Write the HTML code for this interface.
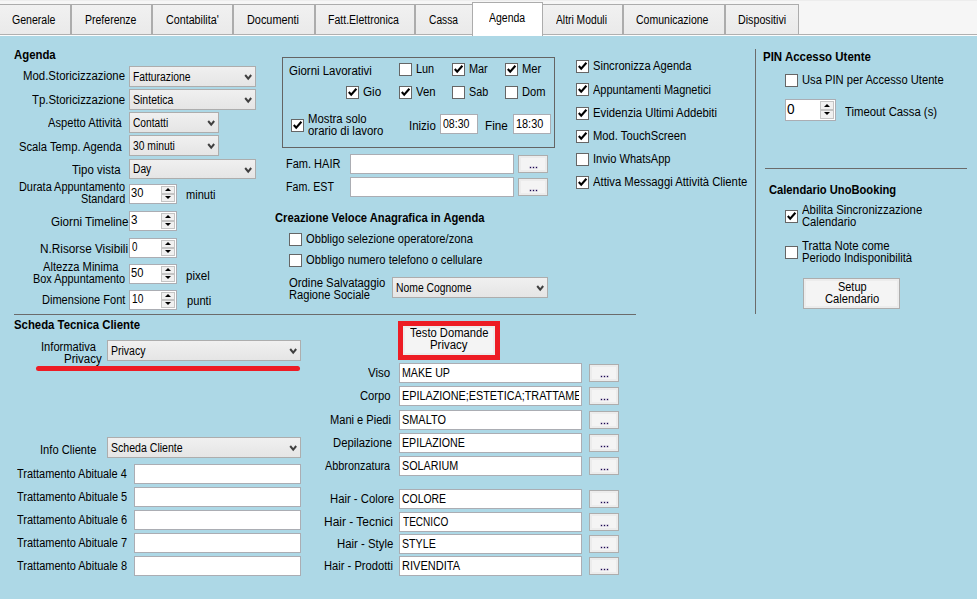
<!DOCTYPE html><html><head><meta charset="utf-8"><title>Agenda</title><style>
html,body{margin:0;padding:0;}
body{width:977px;height:599px;overflow:hidden;background:#add8e6;font-family:"Liberation Sans",sans-serif;font-size:12px;color:#000;position:relative;}
.t{position:absolute;white-space:nowrap;line-height:14px;font-size:12px;transform-origin:0 0;}
.b{font-weight:bold;}
.top{position:absolute;left:0;top:0;width:977px;height:36px;background:#f6f6f6;border-top:1px solid #ededed;box-sizing:border-box;}
.tl{position:absolute;left:0;top:34px;width:977px;height:1px;background:#b0b0b0;box-shadow:0 1px 0 #fcfcfc;}
.tab{position:absolute;top:4px;height:30px;border:1px solid #acacac;border-bottom:none;background:linear-gradient(#f1f1f1,#eaeaea);box-sizing:border-box;}
.tab.sel{top:2px;height:34px;background:#fff;z-index:2;}
.cb{position:absolute;width:13px;height:13px;box-sizing:border-box;border:1px solid #666;background:#fff;}
.cb svg{position:absolute;left:0;top:0;}
.combo{position:absolute;height:21px;box-sizing:border-box;border:1px solid #adadad;background:linear-gradient(#f0f0f0,#e5e5e5);}
.combo svg{position:absolute;right:3.1px;top:6.6px;}
.tb{position:absolute;height:20px;box-sizing:border-box;border:1px solid #abadb3;background:#fff;overflow:hidden;}
.btn{position:absolute;box-sizing:border-box;border:1px solid #adadad;background:#f4f4f4;box-shadow:inset 0 0 0 2px #ececec;}
.num{position:absolute;height:20px;box-sizing:border-box;border:1px solid #abadb3;background:#fff;}
.num i{position:absolute;right:1px;width:14px;height:8px;background:#f0f0f0;border:1px solid #c4c4c4;box-sizing:border-box;}

.num i:after{content:"";position:absolute;left:3px;border-left:3px solid transparent;border-right:3px solid transparent;}
.num i.u:after{bottom:2px;border-bottom:3px solid #000;}
.num i.d:after{top:1px;border-top:3px solid #000;}
.hl{position:absolute;height:1px;background:#6b6b6b;}
.vl{position:absolute;width:1px;background:#6b6b6b;}
.z{z-index:5}
</style></head><body>
<div class="top"></div><div class="tl"></div>
<div class="tab" style="left:-1px;width:72px"></div>
<div class="tab" style="left:71px;width:81px"></div>
<div class="tab" style="left:152px;width:81px"></div>
<div class="tab" style="left:233px;width:82px"></div>
<div class="tab" style="left:315px;width:100px"></div>
<div class="tab" style="left:415px;width:59px"></div>
<div class="tab" style="left:542px;width:81px"></div>
<div class="tab" style="left:623px;width:102px"></div>
<div class="tab" style="left:725px;width:74px"></div>
<div class="tab sel" style="left:472px;width:71px"></div>
<div class="combo" style="left:129px;top:66px;width:127px;height:21px"><svg width="8.4" height="7" viewBox="0 0 8.4 7"><path d="M1.2 1 L4.2 4.6 L7.2 1" fill="none" stroke="#404040" stroke-width="2"/></svg></div>
<div class="combo" style="left:129px;top:89px;width:127px;height:21px"><svg width="8.4" height="7" viewBox="0 0 8.4 7"><path d="M1.2 1 L4.2 4.6 L7.2 1" fill="none" stroke="#404040" stroke-width="2"/></svg></div>
<div class="combo" style="left:129px;top:112px;width:90px;height:21px"><svg width="8.4" height="7" viewBox="0 0 8.4 7"><path d="M1.2 1 L4.2 4.6 L7.2 1" fill="none" stroke="#404040" stroke-width="2"/></svg></div>
<div class="combo" style="left:129px;top:135px;width:90px;height:21px"><svg width="8.4" height="7" viewBox="0 0 8.4 7"><path d="M1.2 1 L4.2 4.6 L7.2 1" fill="none" stroke="#404040" stroke-width="2"/></svg></div>
<div class="combo" style="left:129px;top:159px;width:127px;height:20px"><svg width="8.4" height="7" viewBox="0 0 8.4 7"><path d="M1.2 1 L4.2 4.6 L7.2 1" fill="none" stroke="#404040" stroke-width="2"/></svg></div>
<div class="num" style="left:129px;top:184px;width:48px;height:20px"><i class="u" style="top:1px;height:8px"></i><i class="d" style="top:9px;height:8px"></i></div>
<div class="num" style="left:129px;top:211px;width:48px;height:20px"><i class="u" style="top:1px;height:8px"></i><i class="d" style="top:9px;height:8px"></i></div>
<div class="num" style="left:129px;top:238px;width:48px;height:20px"><i class="u" style="top:1px;height:8px"></i><i class="d" style="top:9px;height:8px"></i></div>
<div class="num" style="left:129px;top:264px;width:48px;height:20px"><i class="u" style="top:1px;height:8px"></i><i class="d" style="top:9px;height:8px"></i></div>
<div class="num" style="left:129px;top:290px;width:48px;height:20px"><i class="u" style="top:1px;height:8px"></i><i class="d" style="top:9px;height:8px"></i></div>
<div style="position:absolute;left:282px;top:57px;width:273px;height:91px;border:1px solid #646464;box-sizing:border-box"></div>
<div class="cb" style="left:399px;top:63px"></div>
<div class="cb" style="left:452px;top:63px"><svg width="11" height="11" viewBox="0 0 11 11"><path d="M1.8 5.0 L4.2 7.7 L9.4 1.7" fill="none" stroke="#000" stroke-width="2.1"/></svg></div>
<div class="cb" style="left:505px;top:63px"><svg width="11" height="11" viewBox="0 0 11 11"><path d="M1.8 5.0 L4.2 7.7 L9.4 1.7" fill="none" stroke="#000" stroke-width="2.1"/></svg></div>
<div class="cb" style="left:346px;top:86px"><svg width="11" height="11" viewBox="0 0 11 11"><path d="M1.8 5.0 L4.2 7.7 L9.4 1.7" fill="none" stroke="#000" stroke-width="2.1"/></svg></div>
<div class="cb" style="left:399px;top:86px"><svg width="11" height="11" viewBox="0 0 11 11"><path d="M1.8 5.0 L4.2 7.7 L9.4 1.7" fill="none" stroke="#000" stroke-width="2.1"/></svg></div>
<div class="cb" style="left:452px;top:86px"></div>
<div class="cb" style="left:505px;top:86px"></div>
<div class="cb" style="left:291px;top:119px"><svg width="11" height="11" viewBox="0 0 11 11"><path d="M1.8 5.0 L4.2 7.7 L9.4 1.7" fill="none" stroke="#000" stroke-width="2.1"/></svg></div>
<div class="tb" style="left:440px;top:114px;width:38px;height:20px"></div>
<div class="tb" style="left:513px;top:114px;width:38px;height:20px"></div>
<div class="tb" style="left:350px;top:154px;width:164px;height:20px"></div>
<div class="btn" style="left:518px;top:155px;width:30px;height:18px;"></div>
<div style="position:absolute;left:530px;top:167px;width:1px;height:1px;background:#1a0a50;box-shadow:0 0 0 0.4px rgba(60,30,110,.55)"></div>
<div style="position:absolute;left:533px;top:167px;width:1px;height:1px;background:#1a0a50;box-shadow:0 0 0 0.4px rgba(60,30,110,.55)"></div>
<div style="position:absolute;left:536px;top:167px;width:1px;height:1px;background:#1a0a50;box-shadow:0 0 0 0.4px rgba(60,30,110,.55)"></div>
<div class="tb" style="left:350px;top:177px;width:164px;height:20px"></div>
<div class="btn" style="left:518px;top:178px;width:30px;height:18px;"></div>
<div style="position:absolute;left:530px;top:190px;width:1px;height:1px;background:#1a0a50;box-shadow:0 0 0 0.4px rgba(60,30,110,.55)"></div>
<div style="position:absolute;left:533px;top:190px;width:1px;height:1px;background:#1a0a50;box-shadow:0 0 0 0.4px rgba(60,30,110,.55)"></div>
<div style="position:absolute;left:536px;top:190px;width:1px;height:1px;background:#1a0a50;box-shadow:0 0 0 0.4px rgba(60,30,110,.55)"></div>
<div class="cb" style="left:289px;top:233px"></div>
<div class="cb" style="left:289px;top:254px"></div>
<div class="combo" style="left:392px;top:277px;width:156px;height:21px"><svg width="8.4" height="7" viewBox="0 0 8.4 7"><path d="M1.2 1 L4.2 4.6 L7.2 1" fill="none" stroke="#404040" stroke-width="2"/></svg></div>
<div class="cb" style="left:576px;top:60px"><svg width="11" height="11" viewBox="0 0 11 11"><path d="M1.8 5.0 L4.2 7.7 L9.4 1.7" fill="none" stroke="#000" stroke-width="2.1"/></svg></div>
<div class="cb" style="left:576px;top:83px"><svg width="11" height="11" viewBox="0 0 11 11"><path d="M1.8 5.0 L4.2 7.7 L9.4 1.7" fill="none" stroke="#000" stroke-width="2.1"/></svg></div>
<div class="cb" style="left:576px;top:107px"><svg width="11" height="11" viewBox="0 0 11 11"><path d="M1.8 5.0 L4.2 7.7 L9.4 1.7" fill="none" stroke="#000" stroke-width="2.1"/></svg></div>
<div class="cb" style="left:576px;top:130px"><svg width="11" height="11" viewBox="0 0 11 11"><path d="M1.8 5.0 L4.2 7.7 L9.4 1.7" fill="none" stroke="#000" stroke-width="2.1"/></svg></div>
<div class="cb" style="left:576px;top:153px"></div>
<div class="cb" style="left:576px;top:176px"><svg width="11" height="11" viewBox="0 0 11 11"><path d="M1.8 5.0 L4.2 7.7 L9.4 1.7" fill="none" stroke="#000" stroke-width="2.1"/></svg></div>
<div class="vl" style="left:755px;top:49px;height:265px"></div>
<div class="cb" style="left:785px;top:74px"></div>
<div class="num" style="left:785px;top:99px;width:51px;height:22px"><i class="u" style="top:1px;height:9px"></i><i class="d" style="top:10px;height:9px"></i></div>
<div class="hl" style="left:765px;top:168px;width:202px"></div>
<div class="cb" style="left:785px;top:210px"><svg width="11" height="11" viewBox="0 0 11 11"><path d="M1.8 5.0 L4.2 7.7 L9.4 1.7" fill="none" stroke="#000" stroke-width="2.1"/></svg></div>
<div class="cb" style="left:785px;top:246px"></div>
<div class="btn" style="left:803px;top:278px;width:97px;height:31px;"></div>
<div class="hl" style="left:14px;top:314px;width:622px"></div>
<div class="combo" style="left:107px;top:340px;width:194px;height:21px"><svg width="8.4" height="7" viewBox="0 0 8.4 7"><path d="M1.2 1 L4.2 4.6 L7.2 1" fill="none" stroke="#404040" stroke-width="2"/></svg></div>
<div style="position:absolute;left:36px;top:366px;width:264px;height:5px;background:#ed1c24;border-radius:2.5px"></div>
<div class="btn" style="left:398px;top:321px;width:102px;height:39px;border:5px solid #ed1c24;background:#f4f4f4;"></div>
<div class="combo" style="left:107px;top:437px;width:194px;height:21px"><svg width="8.4" height="7" viewBox="0 0 8.4 7"><path d="M1.2 1 L4.2 4.6 L7.2 1" fill="none" stroke="#404040" stroke-width="2"/></svg></div>
<div class="tb" style="left:134px;top:464px;width:167px;height:20px"></div>
<div class="tb" style="left:134px;top:487px;width:167px;height:20px"></div>
<div class="tb" style="left:134px;top:510px;width:167px;height:20px"></div>
<div class="tb" style="left:134px;top:533px;width:167px;height:20px"></div>
<div class="tb" style="left:134px;top:556px;width:167px;height:20px"></div>
<div class="tb" style="left:399px;top:363px;width:183px;height:20px"></div>
<div class="btn" style="left:589px;top:364px;width:30px;height:18px;"></div>
<div style="position:absolute;left:601px;top:376px;width:1px;height:1px;background:#1a0a50;box-shadow:0 0 0 0.4px rgba(60,30,110,.55)"></div>
<div style="position:absolute;left:604px;top:376px;width:1px;height:1px;background:#1a0a50;box-shadow:0 0 0 0.4px rgba(60,30,110,.55)"></div>
<div style="position:absolute;left:607px;top:376px;width:1px;height:1px;background:#1a0a50;box-shadow:0 0 0 0.4px rgba(60,30,110,.55)"></div>
<div class="tb" style="left:399px;top:386px;width:183px;height:20px"></div>
<div class="btn" style="left:589px;top:387px;width:30px;height:18px;"></div>
<div style="position:absolute;left:601px;top:399px;width:1px;height:1px;background:#1a0a50;box-shadow:0 0 0 0.4px rgba(60,30,110,.55)"></div>
<div style="position:absolute;left:604px;top:399px;width:1px;height:1px;background:#1a0a50;box-shadow:0 0 0 0.4px rgba(60,30,110,.55)"></div>
<div style="position:absolute;left:607px;top:399px;width:1px;height:1px;background:#1a0a50;box-shadow:0 0 0 0.4px rgba(60,30,110,.55)"></div>
<div class="tb" style="left:399px;top:410px;width:183px;height:20px"></div>
<div class="btn" style="left:589px;top:411px;width:30px;height:18px;"></div>
<div style="position:absolute;left:601px;top:423px;width:1px;height:1px;background:#1a0a50;box-shadow:0 0 0 0.4px rgba(60,30,110,.55)"></div>
<div style="position:absolute;left:604px;top:423px;width:1px;height:1px;background:#1a0a50;box-shadow:0 0 0 0.4px rgba(60,30,110,.55)"></div>
<div style="position:absolute;left:607px;top:423px;width:1px;height:1px;background:#1a0a50;box-shadow:0 0 0 0.4px rgba(60,30,110,.55)"></div>
<div class="tb" style="left:399px;top:433px;width:183px;height:20px"></div>
<div class="btn" style="left:589px;top:434px;width:30px;height:18px;"></div>
<div style="position:absolute;left:601px;top:446px;width:1px;height:1px;background:#1a0a50;box-shadow:0 0 0 0.4px rgba(60,30,110,.55)"></div>
<div style="position:absolute;left:604px;top:446px;width:1px;height:1px;background:#1a0a50;box-shadow:0 0 0 0.4px rgba(60,30,110,.55)"></div>
<div style="position:absolute;left:607px;top:446px;width:1px;height:1px;background:#1a0a50;box-shadow:0 0 0 0.4px rgba(60,30,110,.55)"></div>
<div class="tb" style="left:399px;top:456px;width:183px;height:20px"></div>
<div class="btn" style="left:589px;top:457px;width:30px;height:18px;"></div>
<div style="position:absolute;left:601px;top:469px;width:1px;height:1px;background:#1a0a50;box-shadow:0 0 0 0.4px rgba(60,30,110,.55)"></div>
<div style="position:absolute;left:604px;top:469px;width:1px;height:1px;background:#1a0a50;box-shadow:0 0 0 0.4px rgba(60,30,110,.55)"></div>
<div style="position:absolute;left:607px;top:469px;width:1px;height:1px;background:#1a0a50;box-shadow:0 0 0 0.4px rgba(60,30,110,.55)"></div>
<div class="tb" style="left:399px;top:489px;width:183px;height:20px"></div>
<div class="btn" style="left:589px;top:490px;width:30px;height:18px;"></div>
<div style="position:absolute;left:601px;top:502px;width:1px;height:1px;background:#1a0a50;box-shadow:0 0 0 0.4px rgba(60,30,110,.55)"></div>
<div style="position:absolute;left:604px;top:502px;width:1px;height:1px;background:#1a0a50;box-shadow:0 0 0 0.4px rgba(60,30,110,.55)"></div>
<div style="position:absolute;left:607px;top:502px;width:1px;height:1px;background:#1a0a50;box-shadow:0 0 0 0.4px rgba(60,30,110,.55)"></div>
<div class="tb" style="left:399px;top:512px;width:183px;height:20px"></div>
<div class="btn" style="left:589px;top:513px;width:30px;height:18px;"></div>
<div style="position:absolute;left:601px;top:525px;width:1px;height:1px;background:#1a0a50;box-shadow:0 0 0 0.4px rgba(60,30,110,.55)"></div>
<div style="position:absolute;left:604px;top:525px;width:1px;height:1px;background:#1a0a50;box-shadow:0 0 0 0.4px rgba(60,30,110,.55)"></div>
<div style="position:absolute;left:607px;top:525px;width:1px;height:1px;background:#1a0a50;box-shadow:0 0 0 0.4px rgba(60,30,110,.55)"></div>
<div class="tb" style="left:399px;top:534px;width:183px;height:20px"></div>
<div class="btn" style="left:589px;top:535px;width:30px;height:18px;"></div>
<div style="position:absolute;left:601px;top:547px;width:1px;height:1px;background:#1a0a50;box-shadow:0 0 0 0.4px rgba(60,30,110,.55)"></div>
<div style="position:absolute;left:604px;top:547px;width:1px;height:1px;background:#1a0a50;box-shadow:0 0 0 0.4px rgba(60,30,110,.55)"></div>
<div style="position:absolute;left:607px;top:547px;width:1px;height:1px;background:#1a0a50;box-shadow:0 0 0 0.4px rgba(60,30,110,.55)"></div>
<div class="tb" style="left:399px;top:556px;width:183px;height:20px"></div>
<div class="btn" style="left:589px;top:557px;width:30px;height:18px;"></div>
<div style="position:absolute;left:601px;top:569px;width:1px;height:1px;background:#1a0a50;box-shadow:0 0 0 0.4px rgba(60,30,110,.55)"></div>
<div style="position:absolute;left:604px;top:569px;width:1px;height:1px;background:#1a0a50;box-shadow:0 0 0 0.4px rgba(60,30,110,.55)"></div>
<div style="position:absolute;left:607px;top:569px;width:1px;height:1px;background:#1a0a50;box-shadow:0 0 0 0.4px rgba(60,30,110,.55)"></div>
<div class="t z" style="left:12px;top:13px;transform:scaleX(0.8804);">Generale</div>
<div class="t z" style="left:85px;top:13px;transform:scaleX(0.8766);">Preferenze</div>
<div class="t z" style="left:166px;top:13px;transform:scaleX(0.8929);">Contabilita'</div>
<div class="t z" style="left:247px;top:13px;transform:scaleX(0.9059);">Documenti</div>
<div class="t z" style="left:328px;top:13px;transform:scaleX(0.8786);">Fatt.Elettronica</div>
<div class="t z" style="left:429px;top:13px;transform:scaleX(0.8523);">Cassa</div>
<div class="t z" style="left:489px;top:11px;transform:scaleX(0.8734);">Agenda</div>
<div class="t z" style="left:556px;top:13px;transform:scaleX(0.8583);">Altri Moduli</div>
<div class="t z" style="left:636px;top:13px;transform:scaleX(0.8762);">Comunicazione</div>
<div class="t z" style="left:738px;top:13px;transform:scaleX(0.8905);">Dispositivi</div>
<div class="t b" style="left:14px;top:48px;transform:scaleX(0.9476);">Agenda</div>
<div class="t" style="left:23px;top:69px;transform:scaleX(0.9503);">Mod.Storicizzazione</div>
<div class="t" style="left:133px;top:70px;transform:scaleX(0.8636);">Fatturazione</div>
<div class="t" style="left:32px;top:93px;transform:scaleX(0.9499);">Tp.Storicizzazione</div>
<div class="t" style="left:133px;top:93px;transform:scaleX(0.8779);">Sintetica</div>
<div class="t" style="left:48px;top:116px;transform:scaleX(0.9288);">Aspetto Attività</div>
<div class="t" style="left:133px;top:116px;transform:scaleX(0.8509);">Contatti</div>
<div class="t" style="left:19px;top:140px;transform:scaleX(0.9352);">Scala Temp. Agenda</div>
<div class="t" style="left:133px;top:139px;transform:scaleX(0.8604);">30 minuti</div>
<div class="t" style="left:72px;top:163px;transform:scaleX(0.9529);">Tipo vista</div>
<div class="t" style="left:133px;top:162px;transform:scaleX(0.8553);">Day</div>
<div class="t" style="left:19px;top:180px;transform:scaleX(0.9078);">Durata Appuntamento</div>
<div class="t" style="left:81px;top:192px;transform:scaleX(0.9073);">Standard</div>
<div class="t" style="left:131px;top:186px;transform:scaleX(0.9272);">30</div>
<div class="t" style="left:186px;top:188px;transform:scaleX(0.9202);">minuti</div>
<div class="t" style="left:51px;top:215px;transform:scaleX(0.9686);">Giorni Timeline</div>
<div class="t" style="left:131px;top:213px;transform:scaleX(0.9672);">3</div>
<div class="t" style="left:40px;top:242px;transform:scaleX(0.9810);">N.Risorse Visibili</div>
<div class="t" style="left:132px;top:240px;transform:scaleX(0.8159);">0</div>
<div class="t" style="left:43px;top:260px;transform:scaleX(0.9279);">Altezza Minima</div>
<div class="t" style="left:33px;top:272px;transform:scaleX(0.9083);">Box Appuntamento</div>
<div class="t" style="left:131px;top:266px;transform:scaleX(0.9272);">50</div>
<div class="t" style="left:186px;top:269px;transform:scaleX(0.9658);">pixel</div>
<div class="t" style="left:42px;top:293px;transform:scaleX(0.9193);">Dimensione Font</div>
<div class="t" style="left:132px;top:292px;transform:scaleX(0.8495);">10</div>
<div class="t" style="left:187px;top:294px;transform:scaleX(0.9275);">punti</div>
<div class="t" style="left:289px;top:64px;transform:scaleX(0.9548);">Giorni Lavorativi</div>
<div class="t" style="left:416px;top:62px;transform:scaleX(0.9081);">Lun</div>
<div class="t" style="left:469px;top:62px;transform:scaleX(0.9073);">Mar</div>
<div class="t" style="left:522px;top:62px;transform:scaleX(0.9326);">Mer</div>
<div class="t" style="left:363px;top:85px;transform:scaleX(0.9766);">Gio</div>
<div class="t" style="left:416px;top:85px;transform:scaleX(0.9440);">Ven</div>
<div class="t" style="left:469px;top:85px;transform:scaleX(0.8964);">Sab</div>
<div class="t" style="left:522px;top:85px;transform:scaleX(0.9245);">Dom</div>
<div class="t" style="left:308px;top:112px;transform:scaleX(0.9435);">Mostra solo</div>
<div class="t" style="left:308px;top:124px;transform:scaleX(0.9503);">orario di lavoro</div>
<div class="t" style="left:409px;top:119px;transform:scaleX(0.9558);">Inizio</div>
<div class="t" style="left:443px;top:117px;transform:scaleX(0.8800);">08:30</div>
<div class="t" style="left:485px;top:119px;transform:scaleX(0.9763);">Fine</div>
<div class="t" style="left:516px;top:117px;transform:scaleX(0.9073);">18:30</div>
<div class="t" style="left:286px;top:157px;transform:scaleX(0.9167);">Fam. HAIR</div>
<div class="t" style="left:286px;top:180px;transform:scaleX(0.8880);">Fam. EST</div>
<div class="t b" style="left:275px;top:211px;transform:scaleX(0.9329);">Creazione Veloce Anagrafica in Agenda</div>
<div class="t" style="left:306px;top:232px;transform:scaleX(0.9298);">Obbligo selezione operatore/zona</div>
<div class="t" style="left:306px;top:253px;transform:scaleX(0.9314);">Obbligo numero telefono o cellulare</div>
<div class="t" style="left:289px;top:276px;transform:scaleX(0.9432);">Ordine Salvataggio</div>
<div class="t" style="left:289px;top:288px;transform:scaleX(0.9266);">Ragione Sociale</div>
<div class="t" style="left:396px;top:281px;transform:scaleX(0.8644);">Nome Cognome</div>
<div class="t" style="left:593px;top:59px;transform:scaleX(0.9287);">Sincronizza Agenda</div>
<div class="t" style="left:593px;top:83px;transform:scaleX(0.9159);">Appuntamenti Magnetici</div>
<div class="t" style="left:593px;top:106px;transform:scaleX(0.9439);">Evidenzia Ultimi Addebiti</div>
<div class="t" style="left:593px;top:129px;transform:scaleX(0.9338);">Mod. TouchScreen</div>
<div class="t" style="left:593px;top:152px;transform:scaleX(0.9220);">Invio WhatsApp</div>
<div class="t" style="left:593px;top:175px;transform:scaleX(0.9405);">Attiva Messaggi Attività Cliente</div>
<div class="t b" style="left:763px;top:50px;transform:scaleX(0.9563);">PIN Accesso Utente</div>
<div class="t" style="left:802px;top:73px;transform:scaleX(0.9317);">Usa PIN per Accesso Utente</div>
<div class="t" style="left:787px;top:102px;transform:scaleX(0.9767);font-size:14px;">0</div>
<div class="t" style="left:845px;top:105px;transform:scaleX(0.9436);">Timeout Cassa (s)</div>
<div class="t b" style="left:769px;top:183px;transform:scaleX(0.9302);">Calendario UnoBooking</div>
<div class="t" style="left:802px;top:203px;transform:scaleX(0.9487);">Abilita Sincronizzazione</div>
<div class="t" style="left:802px;top:215px;transform:scaleX(0.9333);">Calendario</div>
<div class="t" style="left:802px;top:239px;transform:scaleX(0.9498);">Tratta Note come</div>
<div class="t" style="left:802px;top:251px;transform:scaleX(0.9380);">Periodo Indisponibilità</div>
<div class="t" style="left:838px;top:280px;transform:scaleX(0.9110);">Setup</div>
<div class="t" style="left:825px;top:292px;transform:scaleX(0.9336);">Calendario</div>
<div class="t b" style="left:14px;top:318px;transform:scaleX(0.9470);">Scheda Tecnica Cliente</div>
<div class="t" style="left:41px;top:340px;transform:scaleX(0.9277);">Informativa</div>
<div class="t" style="left:64px;top:352px;transform:scaleX(0.9576);">Privacy</div>
<div class="t" style="left:111px;top:344px;transform:scaleX(0.8756);">Privacy</div>
<div class="t" style="left:410px;top:326px;transform:scaleX(0.9330);">Testo Domande</div>
<div class="t" style="left:430px;top:338px;transform:scaleX(0.9508);">Privacy</div>
<div class="t" style="left:40px;top:443px;transform:scaleX(0.9278);">Info Cliente</div>
<div class="t" style="left:111px;top:441px;transform:scaleX(0.8807);">Scheda Cliente</div>
<div class="t" style="left:17px;top:467px;transform:scaleX(0.9126);">Trattamento Abituale 4</div>
<div class="t" style="left:17px;top:490px;transform:scaleX(0.9157);">Trattamento Abituale 5</div>
<div class="t" style="left:17px;top:513px;transform:scaleX(0.9163);">Trattamento Abituale 6</div>
<div class="t" style="left:17px;top:536px;transform:scaleX(0.9150);">Trattamento Abituale 7</div>
<div class="t" style="left:17px;top:559px;transform:scaleX(0.9156);">Trattamento Abituale 8</div>
<div class="t" style="left:368px;top:366px;transform:scaleX(0.9618);">Viso</div>
<div class="t z" style="left:402px;top:366px;transform:scaleX(0.8876);">MAKE UP</div>
<div class="t" style="left:360px;top:389px;transform:scaleX(0.9361);">Corpo</div>
<div class="t z" style="left:402px;top:389px;transform:scaleX(0.9020);">EPILAZIONE;ESTETICA;TRATTAME</div>
<div class="t" style="left:330px;top:413px;transform:scaleX(0.9230);">Mani e Piedi</div>
<div class="t z" style="left:402px;top:413px;transform:scaleX(0.9096);">SMALTO</div>
<div class="t" style="left:333px;top:436px;transform:scaleX(0.9400);">Depilazione</div>
<div class="t z" style="left:402px;top:436px;transform:scaleX(0.8878);">EPILAZIONE</div>
<div class="t" style="left:325px;top:459px;transform:scaleX(0.9039);">Abbronzatura</div>
<div class="t z" style="left:402px;top:459px;transform:scaleX(0.8953);">SOLARIUM</div>
<div class="t" style="left:330px;top:492px;transform:scaleX(0.9416);">Hair - Colore</div>
<div class="t z" style="left:402px;top:492px;transform:scaleX(0.8697);">COLORE</div>
<div class="t" style="left:324px;top:515px;transform:scaleX(0.9970);">Hair - Tecnici</div>
<div class="t z" style="left:403px;top:515px;transform:scaleX(0.8379);">TECNICO</div>
<div class="t" style="left:337px;top:537px;transform:scaleX(0.9476);">Hair - Style</div>
<div class="t z" style="left:402px;top:537px;transform:scaleX(0.8878);">STYLE</div>
<div class="t" style="left:324px;top:559px;transform:scaleX(0.9306);">Hair - Prodotti</div>
<div class="t z" style="left:402px;top:559px;transform:scaleX(0.9188);">RIVENDITA</div>
<div style="position:absolute;left:579px;top:387px;width:2px;height:18px;background:#fff;z-index:6"></div>
<div style="position:absolute;left:581px;top:386px;width:1px;height:20px;background:#abadb3;z-index:6"></div>
</body></html>
